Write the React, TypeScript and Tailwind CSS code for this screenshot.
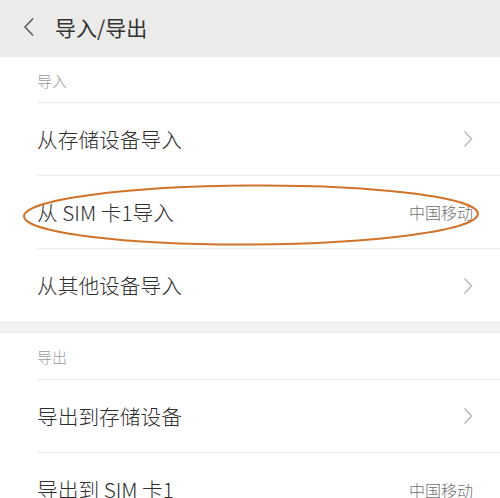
import React from "react";

const font = { fontFamily: '"Noto Sans CJK SC", "Noto Sans", sans-serif' };

function Chevron() {
  return (
    <svg width="10" height="18" viewBox="0 0 10 18" fill="none">
      <path d="M1.5 1.5 L8.5 9 L1.5 16.5" stroke="#b8b8b8" strokeWidth="1.4" />
    </svg>
  );
}

function Row({ label, right, chevron, last }: { label: string; right?: string; chevron?: boolean; last?: boolean }) {
  return (
    <div className={`flex h-[73px] items-center justify-between pr-[27px] ${last ? "" : "border-b border-[#ececec]"}`}>
      <span className="text-[20.7px] font-light text-[#2e2e2e] leading-none">{label}</span>
      {chevron && <Chevron />}
      {right && <span className="text-[16px] font-light text-[#6f6f6f] leading-none">{right}</span>}
    </div>
  );
}

export default function App() {
  return (
    <div className="relative w-[500px] h-[498px] overflow-hidden bg-white" style={font}>
      <div className="flex h-[57px] items-center bg-[#ebecea] pl-[23px] pb-[3px]">
        <svg width="12" height="20" viewBox="0 0 12 20" fill="none">
          <path d="M10 1.5 L2 10 L10 18.5" stroke="#555555" strokeWidth="1.5" />
        </svg>
        <span className="ml-[20px] text-[21px] text-[#333333] leading-none">导入/导出</span>
      </div>
      <div className="pl-[37px]">
        <div className="flex h-[46px] items-center border-b border-[#ececec] pt-[2px]">
          <span className="text-[15px] font-light text-[#9a9a9a] leading-none">导入</span>
        </div>
        <Row label="从存储设备导入" chevron />
        <Row label="从 SIM 卡1导入" right="中国移动" />
        <Row label="从其他设备导入" chevron last />
      </div>
      <div className="h-[11px] bg-[#f3f3f3] border-y border-[#e9e9e9]" />
      <div className="pl-[37px]">
        <div className="flex h-[47px] items-center border-b border-[#ececec]">
          <span className="text-[15px] font-light text-[#9a9a9a] leading-none">导出</span>
        </div>
        <Row label="导出到存储设备" chevron />
        <Row label="导出到 SIM 卡1" right="中国移动" last />
      </div>
      <svg className="absolute left-0 top-0" width="500" height="498" viewBox="0 0 500 498" fill="none">
        <ellipse cx="251" cy="215" rx="227" ry="29.5" stroke="#d2732a" strokeWidth="2" transform="rotate(-0.3 251 215)" />
      </svg>
    </div>
  );
}
